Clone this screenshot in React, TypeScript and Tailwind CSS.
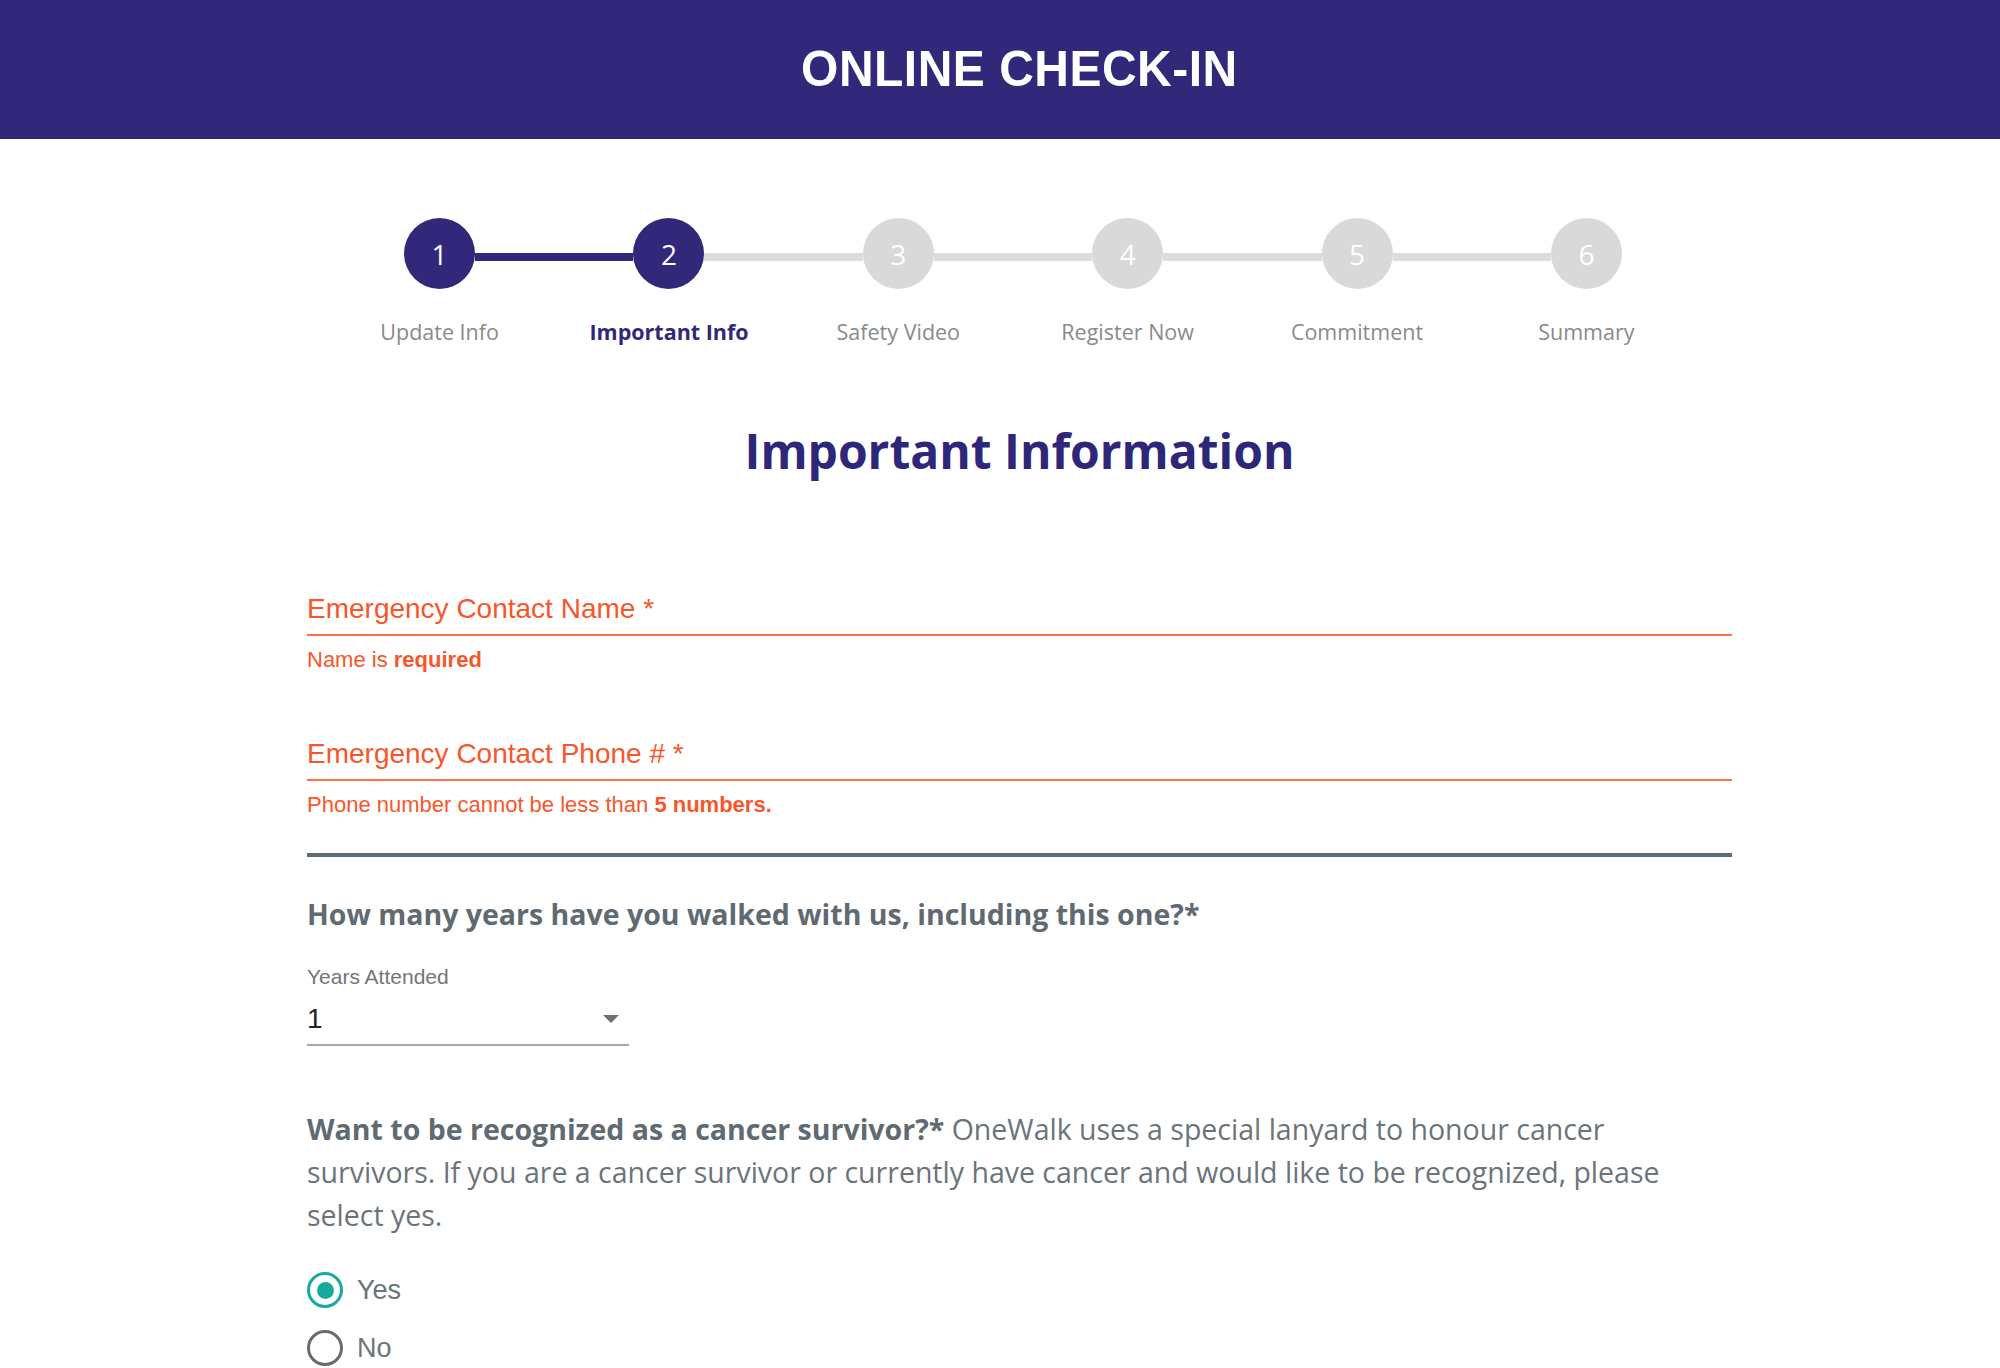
import React from "react";

const steps = [
  "Update Info",
  "Important Info",
  "Safety Video",
  "Register Now",
  "Commitment",
  "Summary",
];

const current = 2;

const Stepper = () => {
  return (
    <div className="ml-[325px] w-[1376px] mt-[79px]">
      <div className="flex items-center px-[79px]">
        {steps.map((s, i) => {
          const n = i + 1;
          const done = n <= current;
          return (
            <React.Fragment key={s}>
              {i > 0 && (
                <div
                  className={`flex-1 h-[8px] mt-[6px] ${
                    n <= current ? "bg-[#31287a]" : "bg-[#dcdcdc]"
                  }`}
                />
              )}
              <div
                className={`w-[71px] h-[71px] rounded-full flex items-center justify-center text-[28px] font-medium text-white font-['Open_Sans',sans-serif] ${
                  done ? "bg-[#31287a]" : "bg-[#d9d9d9]"
                }`}
              >
                {n}
              </div>
            </React.Fragment>
          );
        })}
      </div>
      <div className="flex mt-[30px]">
        {steps.map((s, i) => (
          <div
            key={s}
            className={`w-[229.33px] text-center text-[21.5px] leading-[26px] font-['Open_Sans',sans-serif] ${
              i + 1 === current
                ? "text-[#31287a] font-bold"
                : "text-[#8a8a8a]"
            }`}
          >
            {s}
          </div>
        ))}
      </div>
    </div>
  );
};

const ErrorField = ({
  label,
  error,
  strong,
}: {
  label: string;
  error: string;
  strong: string;
}) => (
  <div>
    <div className="pb-[10px] border-b-2 border-[#ff7043] text-[28px] leading-[30px] text-[#f8562a]">
      {label}
    </div>
    <div className="mt-[12px] text-[22px] leading-[24px] text-[#f8562a]">
      {error} <span className="font-bold">{strong}</span>
    </div>
  </div>
);

const Radio = ({ label, checked }: { label: string; checked?: boolean }) => (
  <label className="flex items-center h-[58px] gap-[14px]">
    <span
      className={`w-[36px] h-[36px] rounded-full border-[3px] flex items-center justify-center ${
        checked ? "border-[#17ab9f]" : "border-[#6b6b6b]"
      }`}
    >
      {checked && <span className="w-[17px] h-[17px] rounded-full bg-[#17ab9f]" />}
    </span>
    <span className="text-[27px] text-[#6b747b]">{label}</span>
  </label>
);

export default function App() {
  return (
    <div className="min-h-screen bg-white font-['Liberation_Sans',Arial,sans-serif]">
      <header className="h-[139px] bg-[#31287a] flex items-center justify-center pl-[38px]">
        <h1 className="text-white text-[50px] font-bold tracking-[0.5px] scale-x-[0.96] font-['Liberation_Sans',Arial,sans-serif]">
          ONLINE CHECK-IN
        </h1>
      </header>

      <Stepper />

      <div className="ml-[307px] w-[1425px]">
        <h2 className="mt-[78px] text-center text-[48px] leading-[56px] font-bold text-[#2e2678] font-['Open_Sans',sans-serif]">
          Important Information
        </h2>

        <div className="mt-[115px]">
          <ErrorField
            label="Emergency Contact Name *"
            error="Name is"
            strong="required"
          />
        </div>
        <div className="mt-[67px]">
          <ErrorField
            label="Emergency Contact Phone # *"
            error="Phone number cannot be less than"
            strong="5 numbers."
          />
        </div>

        <div className="mt-[36px] h-[4px] bg-[#5f6a72]" />

        <p className="mt-[37px] text-[28.5px] leading-[40px] font-bold text-[#5f6a72] font-['Open_Sans',sans-serif]">
          How many years have you walked with us, including this one?*
        </p>

        <div className="mt-[31px] w-[322px]">
          <div className="text-[21px] leading-[24px] text-[#757575]">Years Attended</div>
          <div className="mt-[15px] pb-[10px] border-b-2 border-[#a8a8a8] flex items-center justify-between">
            <span className="text-[28px] leading-[30px] text-[#222]">1</span>
            <svg width="16" height="8" viewBox="0 0 16 8" className="mr-[10px]">
              <path d="M0 0 L16 0 L8 8 Z" fill="#6f6f6f" />
            </svg>
          </div>
        </div>

        <p className="mt-[62px] w-[1400px] text-[28.5px] leading-[43px] text-[#6b747b] font-['Open_Sans',sans-serif]">
          <span className="font-bold text-[#5f6a72]">
            Want to be recognized as a cancer survivor?*
          </span>{" "}
          OneWalk uses a special lanyard to honour cancer survivors. If you are a
          cancer survivor or currently have cancer and would like to be
          recognized, please select yes.
        </p>

        <div className="mt-[24px]">
          <Radio label="Yes" checked />
          <Radio label="No" />
        </div>
      </div>
    </div>
  );
}
